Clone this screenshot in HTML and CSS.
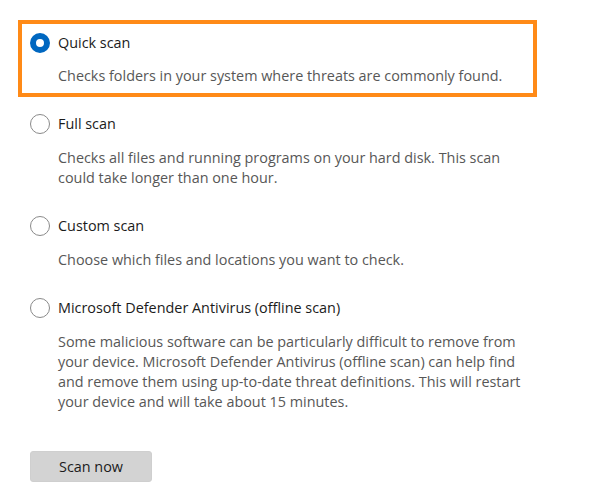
FILE: index.html
```html
<!DOCTYPE html>
<html lang="en">
<head>
<meta charset="utf-8">
<title>Scan options</title>
<link rel="stylesheet" href="styles.css">
</head>
<body>
<main class="page">
  <div class="options">
    <section class="option option--highlight">
      <label class="option-row">
        <span class="radio radio--checked"></span>
        <span class="option-title">Quick scan</span>
      </label>
      <p class="option-desc">Checks folders in your system where threats are commonly found.</p>
    </section>
    <section class="option">
      <label class="option-row">
        <span class="radio"></span>
        <span class="option-title">Full scan</span>
      </label>
      <p class="option-desc">Checks all files and running programs on your hard disk. This scan could take longer than one hour.</p>
    </section>
    <section class="option">
      <label class="option-row">
        <span class="radio"></span>
        <span class="option-title">Custom scan</span>
      </label>
      <p class="option-desc">Choose which files and locations you want to check.</p>
    </section>
    <section class="option">
      <label class="option-row">
        <span class="radio"></span>
        <span class="option-title">Microsoft Defender Antivirus (offline scan)</span>
      </label>
      <p class="option-desc">Some malicious software can be particularly difficult to remove from your device. Microsoft Defender Antivirus (offline scan) can help find and remove them using up-to-date threat definitions. This will restart your device and will take about 15 minutes.</p>
    </section>
  </div>
  <button class="scan-btn" type="button">Scan now</button>
</main>
</body>
</html>
```

FILE: styles.css
```css
* { box-sizing: border-box; }
html, body {
  margin: 0;
  padding: 0;
  background: #ffffff;
}
body {
  font-family: "Open Sans", "Noto Sans", "Liberation Sans", sans-serif;
  font-size: 14.4px;
  color: #1b1b1b;
}
.page {
  padding: 20px 0 0 0;
}
.options {
  display: flex;
  flex-direction: column;
}
.option {
  padding-left: 30px;
  margin-top: 28px;
}
.option--highlight {
  margin-top: 0;
  margin-left: 18px;
  width: 519px;
  padding: 9px 0 7px 8px;
  border: 4px solid #ff8a17;
}
.option--highlight + .option {
  margin-top: 17px;
}
.option-row {
  display: flex;
  align-items: center;
  gap: 8px;
  height: 20px;
}
.radio {
  width: 20px;
  height: 20px;
  border-radius: 50%;
  border: 1px solid #8a8a8a;
  background: #fff;
  flex: none;
}
.radio--checked {
  border: 6px solid #0067c0;
  background: #fff;
}
.option-title {
  font-size: 14.4px;
  line-height: 20px;
  color: #1b1b1b;
}
.option-desc {
  margin: 14px 0 0 28px;
  max-width: 472px;
  line-height: 20px;
  color: #575757;
}
.option--highlight .option-desc {
  margin-top: 13px;
}
.scan-btn {
  display: block;
  margin: 39px 0 0 30px;
  width: 122px;
  height: 31px;
  border: 1px solid #cfcfcf;
  border-radius: 3px;
  background: #d3d3d3;
  font-family: inherit;
  font-size: 14.4px;
  color: #1b1b1b;
  padding: 0;
}
```
